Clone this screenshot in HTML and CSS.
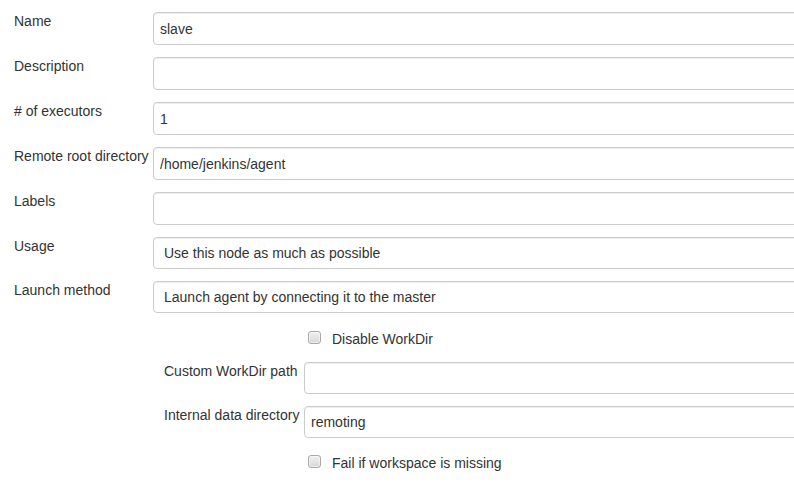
FILE: index.html
```html
<!DOCTYPE html>
<html>
<head>
<meta charset="utf-8">
<link rel="stylesheet" href="styles.css">
</head>
<body>
<form class="form">
  <div class="row">
    <label class="name">Name</label>
    <div class="main"><input class="field" type="text" value="slave"></div>
  </div>
  <div class="row">
    <label class="name">Description</label>
    <div class="main"><input class="field" type="text" value=""></div>
  </div>
  <div class="row">
    <label class="name"># of executors</label>
    <div class="main"><input class="field" type="text" value="1"></div>
  </div>
  <div class="row">
    <label class="name">Remote root directory</label>
    <div class="main"><input class="field" type="text" value="/home/jenkins/agent"></div>
  </div>
  <div class="row">
    <label class="name">Labels</label>
    <div class="main"><input class="field" type="text" value=""></div>
  </div>
  <div class="row row-select">
    <label class="name">Usage</label>
    <div class="main"><select class="field select"><option>Use this node as much as possible</option></select></div>
  </div>
  <div class="row row-select">
    <label class="name">Launch method</label>
    <div class="main"><select class="field select"><option>Launch agent by connecting it to the master</option></select></div>
  </div>
  <div class="nested">
    <div class="check-row">
      <span class="checkbox"></span>
      <span class="check-label">Disable WorkDir</span>
    </div>
    <div class="row row-sub">
      <label class="name name-sub">Custom WorkDir path</label>
      <div class="main"><input class="field" type="text" value=""></div>
    </div>
    <div class="row row-sub">
      <label class="name name-sub">Internal data directory</label>
      <div class="main"><input class="field" type="text" value="remoting"></div>
    </div>
    <div class="check-row check-last">
      <span class="checkbox"></span>
      <span class="check-label">Fail if workspace is missing</span>
    </div>
  </div>
</form>
</body>
</html>
```

FILE: styles.css
```css
html, body {
  margin: 0;
  padding: 0;
  background: #fff;
  overflow: hidden;
}

body {
  width: 794px;
  height: 483px;
  font-family: "Liberation Sans", Arial, sans-serif;
  font-size: 14px;
  color: #333;
}

.form {
  width: 820px;
  padding: 12px 0 0 14px;
  box-sizing: border-box;
}

.row {
  display: flex;
  align-items: flex-start;
  margin-bottom: 12px;
}

.name {
  flex: 0 0 139px;
  width: 139px;
  line-height: 18px;
  white-space: nowrap;
}

.main {
  flex: 1;
  min-width: 0;
}

.field {
  display: block;
  width: 100%;
  height: 33px;
  box-sizing: border-box;
  margin: 0;
  padding: 0 6px;
  border: 1px solid #ccc;
  border-radius: 4px;
  box-shadow: inset 0 1px 1px rgba(0, 0, 0, 0.075);
  font-family: "Liberation Sans", Arial, sans-serif;
  font-size: 14px;
  color: #333;
  background: #fff;
  outline: none;
}

.row-select .field {
  height: 32px;
}

.select {
  -webkit-appearance: none;
  appearance: none;
  padding: 0 10px;
}

.nested {
  margin-left: 139px;
  padding-left: 11px;
}

.row-sub .field {
  height: 32px;
}

.name-sub {
  flex: 0 0 140px;
  width: 140px;
}

.check-row {
  display: flex;
  align-items: flex-start;
  height: 25px;
  margin-bottom: 12px;
  padding-left: 144px;
  padding-top: 6px;
  box-sizing: border-box;
}

.check-last {
  padding-top: 5px;
}

.checkbox {
  display: block;
  width: 13px;
  height: 13px;
  box-sizing: border-box;
  border: 1px solid #a9a9a9;
  border-radius: 3px;
  background: linear-gradient(#f0f0f0, #d8d8d8);
  box-shadow: inset 0 0 0 1px rgba(255, 255, 255, 0.5);
}

.check-label {
  margin-left: 11px;
  line-height: 18px;
  margin-top: -1px;
}
```
